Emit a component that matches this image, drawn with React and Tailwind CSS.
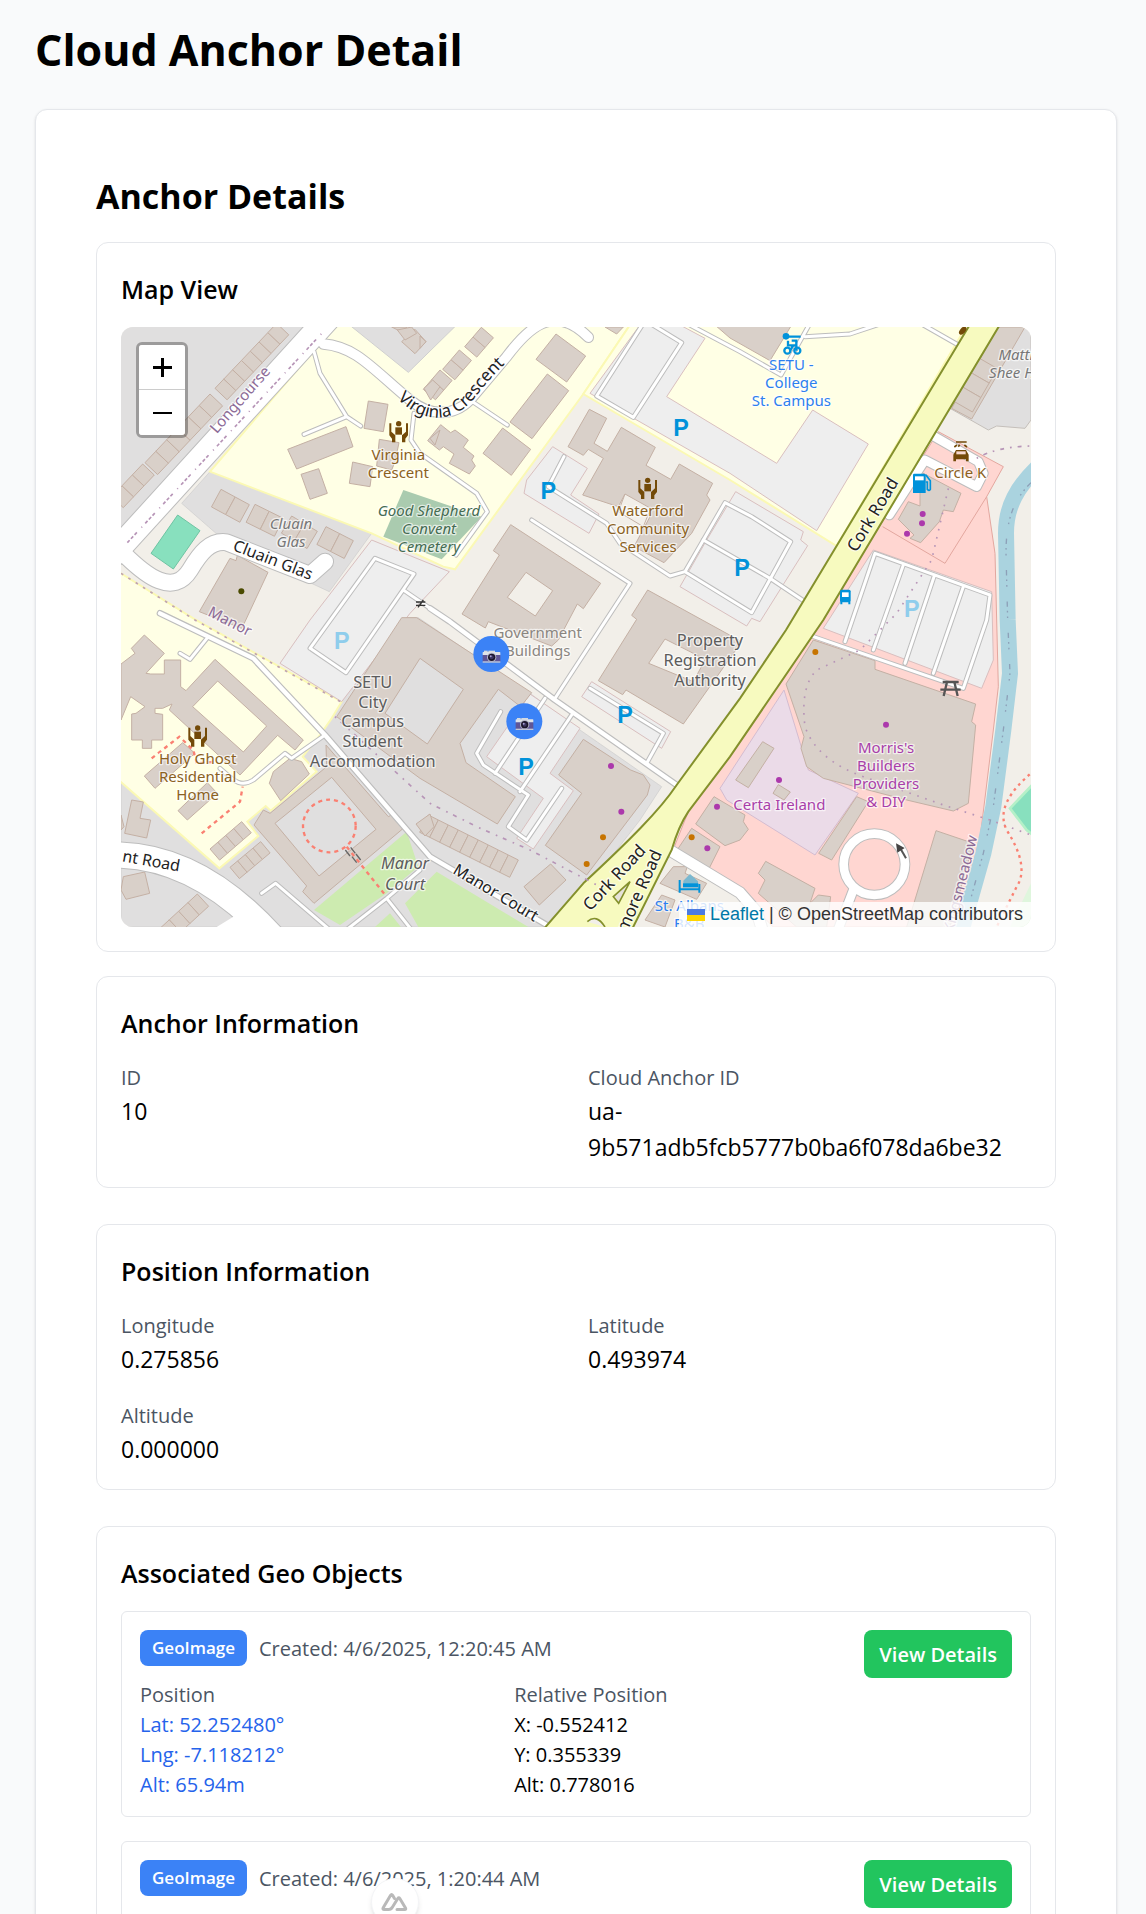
import React from "react";

const BUILDINGS = [
  // Virginia Crescent and Cluain Glas
  "775,243 834,253 820,335 762,325",
  "533,388 708,320 729,380 560,447",
  "573,463 626,446 652,520 600,538",
  "728,426 788,440 780,500 718,490",
  "808,358 867,368 855,425 845,450 800,438",
  "360,715 378,722 382,706 474,757 405,905 395,925 268,875",
  "875,65 915,28 948,65 915,101",
  "845,21 880,38 890,21",
  "905,21 920,40 885,60 862,30",
  "930,48 948,65 930,85",
  "1338,42 1427,108 1370,186 1278,118",
  "1312,162 1376,212 1266,356 1200,306",
  "1178,324 1262,388 1204,466 1119,400",
  "992,314 1022,338 1035,330 1075,360 1060,382 1092,408 1085,420 1096,438 1078,462 1018,430 1032,402 1000,380 988,390 953,362",
  "942,205 968,180 990,200 962,240",
  "960,355 990,330 975,375",
  // Waterford Community Services
  "1438,268 1490,295 1452,370 1492,394 1534,322 1636,382 1608,436 1682,478 1708,432 1808,490 1790,525 1800,540 1745,640 1662,728 1572,680 1620,590 1545,522 1525,560 1418,525 1480,415 1435,388 1420,406 1374,380",
  "1815,15 2045,15 1980,122 1860,54",
  "1485,21 1540,21 1520,42",
  // Government Buildings
  "1202,614 1472,790 1420,866 1402,852 1345,960 1325,978 1135,905 1126,924 1056,882 1168,705 1150,692",
  // Property Registration Authority
  "1613,810 1895,965 1720,1212 1548,1110 1538,1124 1465,1082 1580,898 1565,886",
  // SETU City Campus accommodation
  "875,893 920,893 1265,1118 1232,1160 1165,1108 1050,1270 1068,1328 1216,1430 1162,1512 930,1375 680,1190",
  // Units south of the car park
  "1420,1258 1562,1350 1600,1365 1620,1395 1612,1425 1430,1665 1306,1576 1415,1420 1346,1365",
  "1322,1632 1368,1680 1288,1755 1242,1700",
  // Holy Ghost
  "103,945 163,1000 108,1060 122,1062 163,1062 163,1020 212,1020 212,1100 228,1112 315,1018 580,1260 555,1290 503,1246 390,1365 178,1170 186,1152 158,1165 135,1165 135,1180 158,1183 158,1260 125,1260 125,1285 97,1285 97,1260 65,1260 65,1182 78,1180 105,1160 62,1130 33,1200 33,1032 75,1000 64,985",
  "218,1268 255,1300 135,1405 103,1368",
  "292,1388 322,1420 232,1500 204,1472",
  "540,1315 575,1325 598,1362 512,1442 478,1390 490,1355",
  // Manor Court square
  "648,1275 835,1490 850,1482 880,1525 612,1750 578,1715 590,1698 432,1515 460,1470 480,1480 650,1340",
  "65,1440 100,1446 90,1495 122,1500 110,1554 44,1540",
  "33,1485 42,1520 33,1530",
  "40,1670 104,1656 119,1720 48,1738 33,1710",
  "918,1512 960,1482 972,1520 945,1548",
  // Retail park
  "2430,455 2553,520 2530,575 2500,570 2488,605 2432,668 2400,655 2412,645 2365,598 2395,545 2430,558",
  "2110,960 2295,1022 2295,1048 2597,1152 2585,1205 2597,1215 2575,1450 2530,1473 2390,1440 2140,1375 2090,1340 2073,1285 2082,1250 2028,1092",
  "1958,1265 1992,1285 1915,1403 1877,1380",
  "2005,1394 2041,1416 2022,1440 1989,1420",
  "2240,1430 2275,1445 2165,1620 2126,1600",
  "2478,1532 2590,1570 2520,1821 2390,1821",
  "1967,1624 2115,1705 2100,1750 2125,1725 2162,1730 2150,1821 2060,1821 1945,1720 1965,1680 1945,1660",
  "1812,1430 1905,1485 1900,1505 1915,1528 1890,1560 1845,1577 1757,1512",
  "1745,1525 1830,1580 1795,1650 1700,1592",
  "1690,1640 1732,1640 1725,1660 1790,1690 1760,1738 1650,1690",
  "1655,1725 1695,1740 1665,1821 1605,1800",
];

const COURTYARDS = [
  { p: "323,1083 470,1218 400,1296 248,1160", c: "#ffffe5" },
  { p: "665,1372 798,1528 627,1668 495,1510", c: "#e0dfdf" },
  { p: "930,1015 1060,1108 952,1272 825,1180", c: "#e0dfdf" },
  { p: "1248,757 1328,812 1276,888 1192,832", c: "#f2efe9" },
  { p: "1665,957 1750,1000 1785,1020 1750,1085 1616,1030", c: "#f2efe9" },
  { p: "1545,522 1622,565 1600,620 1525,575", c: "#f2efe9" },
];

// Terraces: start, end, number of houses, depth
const TERRACES = [
  [315, 205, 500, 10, 7, 50],
  [105, 428, 300, 222, 6, 52],
  [5, 530, 98, 432, 3, 48],
  [940, 208, 990, 150, 2, 48],
  [998, 148, 1048, 90, 2, 48],
  [1064, 80, 1114, 22, 2, 48],
  [333, 508, 418, 554, 2, 60],
  [435, 553, 520, 595, 2, 60],
  [545, 588, 622, 634, 2, 60],
  [648, 620, 730, 662, 2, 60],
  [300, 1587, 395, 1505, 4, 44],
  [360, 1642, 452, 1565, 4, 44],
  [150, 1825, 262, 1722, 4, 50],
  [955, 1485, 1225, 1620, 9, 58],
  [2600, 110, 2525, 240, 3, -72],
];

const PATHS = [
  "M612,95 L630,160 L710,290 L752,318 M710,290 L582,343",
  "M912,280 L903,360 L930,400 L1100,520 L1132,575 L1038,705",
  "M1080,240 L1192,315",
  "M1600,10 L1460,228 L1570,292 L1715,68 L1620,10",
  "M1730,10 L1890,95 L2013,165 L2100,10 M2085,50 L2220,42 L2310,12 M2440,15 L2545,75",
  "M1362,410 L1315,500 L1490,610 L1530,670 L1680,768 L1725,755 L1845,548 L1925,590 L2042,665 L1925,878 L1725,755",
  "M1780,660 L1980,775 L2085,845",
  "M1265,600 L1560,790 L1335,1135",
  "M600,985 L795,715 L912,762 L708,1058 L605,988 M880,810 L960,865",
  "M1172,1175 L1100,1300 L1120,1335 L1255,1425 L1195,1520 L1250,1560 L1355,1405 M1305,1135 L1155,1360 M1385,1185 L1230,1415",
  "M1440,1105 L1660,1240 L1610,1330",
  "M295,950 L240,1018 L210,1000",
  "M645,1245 L545,1315 L525,1300 L430,1380 C390,1405 370,1380 330,1345",
  "M455,1720 L497,1690 L660,1830 M715,1825 L830,1735 L930,1650 M830,1735 L905,1830",
  "M2105,948 L2560,1105 L2630,900 L2640,825 L2295,700 L2205,965 M2380,735 L2290,990 M2472,770 L2385,1030 M2560,800 L2470,1060",
];

const MID_ROADS = [
  "M960,865 L1020,905 L1335,1140 L1700,1395",
  "M150,880 L430,1015 L645,1245 L960,1610 L1310,1815",
];

const WIDE_ROADS = [
  ["M690,-45 L0,714", 72],
  ["M40,700 C110,770 190,830 240,750 C270,700 300,660 350,667 L600,765 L645,725", 48],
  ["M640,72 C740,80 790,150 900,240 C960,290 1030,290 1080,240 L1190,110 C1250,30 1330,-55 1435,52", 28],
  ["M0,1605 C200,1600 370,1710 520,1890", 76],
  ["M2465,345 L2605,425 L2620,460 L2600,500 L2445,420 L2338,585", 26],
  ["M1675,1588 L1890,1718 L1940,1775 L1960,1840", 32],
  ["M2230,1710 L2180,1840", 26],
];

const P_SIGNS = [
  [1713, 347], [1315, 537], [1896, 767], [1545, 1208], [1248, 1365],
];
const P_FAINT = [[695, 987], [2405, 892]];

const DOTS = [
  [394, 814, "#4a4a00"], [2438, 582, "#ac39ac"], [2436, 610, "#ac39ac"], [2391, 641, "#ac39ac"],
  [1503, 1338, "#ac39ac"], [1534, 1475, "#ac39ac"], [1479, 1552, "#c77400"], [1430, 1632, "#c77400"],
  [2116, 996, "#c77400"], [2328, 1214, "#ac39ac"], [2007, 1380, "#ac39ac"],
  [1821, 1460, "#ac39ac"], [1745, 1552, "#c77400"], [1792, 1585, "#ac39ac"],
];

const LABELS = [
  { x: 865, y: 421, c: "#8b6122", lines: ["Virginia", "Crescent"] },
  { x: 1614, y: 589, c: "#8b6122", lines: ["Waterford", "Community", "Services"] },
  { x: 263, y: 1333, c: "#8b6122", lines: ["Holy Ghost", "Residential", "Home"] },
  { x: 2551, y: 473, c: "#8b6122", lines: ["Circle K"] },
  { x: 2044, y: 149, c: "#2d7ff0", lines: ["SETU -", "College", "St. Campus"] },
  { x: 1738, y: 1773, c: "#2d7ff0", lines: ["St. Albans", "B&B"] },
  { x: 2328, y: 1300, c: "#a93fa9", lines: ["Morris's", "Builders", "Providers", "& DIY"] },
  { x: 2008, y: 1469, c: "#a93fa9", lines: ["Certa Ireland"] },
  { x: 1283, y: 955, c: "#8a8580", lines: ["Government", "Buildings"] },
  { x: 543, y: 627, c: "#777", i: true, lines: ["Cluain", "Glas"] },
  { x: 957, y: 588, c: "#456b52", i: true, lines: ["Good Shepherd", "Convent", "Cemetery"] },
  { x: 2752, y: 119, c: "#777", i: true, lines: ["Matthew", "Shee House"] },
];
const BIG_LABELS = [
  { x: 788, y: 1104, lines: ["SETU", "City", "Campus", "Student", "Accommodation"], gap: 59 },
  { x: 1800, y: 979, lines: ["Property", "Registration", "Authority"], gap: 59 },
  { x: 885, y: 1646, i: true, lines: ["Manor", "Court"], gap: 64 },
];

function Terrace({ d: [x1, y1, x2, y2, n, depth] }) {
  const dx = (x2 - x1) / n;
  const dy = (y2 - y1) / n;
  const len = Math.hypot(dx, dy);
  const nx = (-dy / len) * depth;
  const ny = (dx / len) * depth;
  return Array.from({ length: n }, (_, k) => {
    const ax = x1 + dx * k;
    const ay = y1 + dy * k;
    return (
      <polygon
        key={k}
        points={`${ax},${ay} ${ax + dx},${ay + dy} ${ax + dx + nx},${ay + dy + ny} ${ax + nx},${ay + ny}`}
      />
    );
  });
}

function Label({ x, y, c = "#5c5c5c", i, lines, gap = 54, size = 45 }) {
  return (
    <text x={x} y={y} fill={c} fontSize={size} fontStyle={i ? "italic" : "normal"} textAnchor="middle">
      {lines.map((l, k) => (
        <tspan key={l} x={x} dy={k ? gap : 0}>{l}</tspan>
      ))}
    </text>
  );
}

function Community({ x, y }) {
  return (
    <g transform={`translate(${x} ${y})`} fill="#734a08">
      <circle cx="0" cy="-24" r="8" />
      <rect x="-10" y="-13" width="20" height="22" />
      <path d="M-28,-25 h6 v25 l12,11 v21 h-10 v-11 l-8,-10z M28,-25 h-6 v25 l-12,11 v21 h10 v-11 l8,-10z" />
    </g>
  );
}

function Marker({ x, y }) {
  return (
    <g transform={`translate(${x} ${y})`}>
      <circle r="54" fill="#3b82f6" />
      <rect x="-22" y="-10" width="11" height="5" fill="#d5dadf" />
      <rect x="-9" y="-10" width="20" height="5" fill="#d5dadf" />
      <rect x="-26" y="-6" width="53" height="10" rx="2" fill="#dfe3e8" />
      <rect x="-26" y="3" width="53" height="20" fill="#5f5596" />
      <rect x="-26" y="22" width="53" height="4" fill="#c3c6d6" />
      <circle cx="1" cy="10" r="14" fill="#b3b4c8" />
      <circle cx="1" cy="10" r="11" fill="#1c162c" />
      <circle cx="1" cy="10" r="6" fill="#3c3560" />
      <circle cx="-2" cy="7" r="3" fill="#a9a2d4" />
    </g>
  );
}

function MapDrawing() {
  return (
    <svg
      viewBox="33 21 2730 1800"
      preserveAspectRatio="xMidYMid slice"
      className="block h-full w-full"
      fontFamily='"Noto Sans", sans-serif'
      role="img"
      aria-label="Street map around Cork Road"
    >
      <rect x="0" y="0" width="2800" height="1850" fill="#f2efe9" />

      {/* Land use */}
      <g fill="#e0dfdf">
        <polygon points="0,0 620,0 0,690" />
        <polygon points="215,550 300,455 785,640 658,815 540,760 340,645 318,640" stroke="#ccc" strokeWidth="2" />
        <polygon points="33,1383 328,1645 445,1548 412,1505 467,1458 620,1355 578,1310 630,1245 695,1145 885,893 925,893 1260,1120 1410,1230 1655,1400 1590,1500 1450,1680 1300,1821 33,1821" stroke="#ccc" strokeWidth="2" />
        <polygon points="2665,21 2520,265 2635,330 2660,318 2745,325 2763,300 2763,21" stroke="#c4bfba" strokeWidth="3" />
      </g>
      <g fill="#ffffe5" stroke="#fbf9b4" strokeWidth="6">
        <polygon points="690,0 300,455 785,640 1000,740 1035,748 1420,222 1570,0" />
        <polygon points="1570,0 1420,222 1860,480 2180,678 2580,0" />
        <polygon points="20,752 250,895 695,1145 665,1195 630,1245 578,1310 620,1355 482,1472 467,1458 412,1505 445,1548 328,1645 20,1375" />
      </g>
      <polygon points="700,0 895,157 1055,0" fill="#e0dfdf" stroke="#cfcfcf" strokeWidth="3" />
      <polygon points="880,510 1115,590 995,718 820,650" fill="#aacbaf" />
      <polygon points="203,585 270,632 190,747 123,700" fill="#88e0be" stroke="#6fc4a3" strokeWidth="3" />
      <g fill="#cdebb0">
        <polygon points="890,1535 925,1640 830,1720 690,1815 612,1770" />
        <polygon points="885,1750 980,1655 1270,1830 930,1830" />
        <polygon points="785,1830 840,1780 880,1830" />
      </g>
      <polygon
        points="2485,335 2680,440 2630,530 2655,700 2665,1100 2650,1230 2612,1540 2590,1640 2560,1740 2530,1821 1990,1821 1930,1760 1685,1600 1735,1475 2140,900 2320,600"
        fill="#ffd6d1" stroke="#e3a79f" strokeWidth="3"
      />
      <path d="M2630,530 L2505,730 L2318,620" fill="none" stroke="#e3a79f" strokeWidth="3" />
      <polygon points="2022,1110 2095,1350 2245,1420 2115,1605 1850,1440 1830,1405" fill="#ebdbe8" stroke="#d3bcd0" strokeWidth="3" />
      <polygon points="2700,1465 2800,1360 2800,1570 2750,1530" fill="#88e0be" stroke="#b5f0c8" strokeWidth="8" />
      <polygon points="2700,1821 2763,1690 2763,1821" fill="#dff6dd" />

      {/* Car parks */}
      <g fill="#eeeeee" stroke="#d9bfbf" strokeWidth="3">
        <polygon points="785,660 1018,755 900,880 695,1145 510,1030 600,900" />
        <polygon points="1590,15 1440,220 1860,460 2120,632 2275,372 2108,270 2000,430 1860,345 1670,230 1785,55 1710,15" />
        <polygon points="1328,380 1432,445 1382,525 1467,582 1437,640 1242,520 1250,480" />
        <polygon points="1877,515 2080,635 2072,660 2093,677 1950,905 1925,895 1910,918 1710,800 1790,660" />
        <polygon points="2290,690 2645,815 2650,1020 2615,1105 2140,925" />
        <polygon points="1260,1122 1410,1225 1320,1360 1390,1412 1270,1587 1220,1555 1300,1435 1130,1310" />
        <polygon points="1445,1085 1682,1235 1655,1285 1415,1130" />
      </g>

      {/* River */}
      <path d="M2790,435 C2720,500 2688,560 2688,640 L2693,900 L2700,1060 L2680,1230 L2650,1460 L2620,1600 L2555,1830" fill="none" stroke="#aad3df" strokeWidth="48" />
      <path d="M2763,488 C2710,540 2688,600 2688,700 L2693,900 L2700,1060 L2680,1230 L2650,1460 L2620,1600 L2570,1780" fill="none" stroke="#8da0b8" strokeWidth="4" strokeDasharray="16 12 5 12 5 44" />

      {/* Buildings */}
      <g fill="#d9d0c9" stroke="#c4b0a4" strokeWidth="3">
        <polygon points="2665,21 2745,21 2585,297 2525,265" />
        {TERRACES.map((d, k) => <Terrace key={k} d={d} />)}
        {BUILDINGS.map((p) => <polygon key={p} points={p} />)}
        {COURTYARDS.map((y) => <polygon key={y.p} points={y.p} style={{ fill: y.c }} />)}
      </g>

      {/* Roads: casing, then fill */}
      <g fill="none" strokeLinejoin="round" strokeLinecap="round">
        <g stroke="#bdbdbd">
          {PATHS.map((d) => <path key={d} d={d} strokeWidth="15" />)}
          {MID_ROADS.map((d) => <path key={d} d={d} strokeWidth="20" />)}
          {WIDE_ROADS.map(([d, w]) => <path key={d} d={d} strokeWidth={w + 6} />)}
          <circle cx="2293" cy="1633" r="92" strokeWidth="32" />
        </g>
        <g stroke="#fff">
          {PATHS.map((d) => <path key={d} d={d} strokeWidth="9" />)}
          {MID_ROADS.map((d) => <path key={d} d={d} strokeWidth="13" />)}
          {WIDE_ROADS.map(([d, w]) => <path key={d} d={d} strokeWidth={w} />)}
          <circle cx="2293" cy="1633" r="92" strokeWidth="26" />
        </g>
      </g>
      <polygon points="320,1821 375,1787 480,1840 320,1840" fill="#fff" />

      {/* Cork Road */}
      <path
        d="M2600,-20 L2028,930 L1890,1135 L1700,1395 C1650,1470 1560,1560 1420,1690 L1290,1840 L1560,1840 L1685,1590 Q1705,1520 1735,1475 L1860,1310 L2140,900 L2690,-20z"
        fill="#f7fabf" stroke="#84902c" strokeWidth="6"
      />
      <path d="M1510,1730 L1560,1685 L1526,1750z" fill="#e6e2d8" stroke="#84902c" strokeWidth="5" />
      <path d="M1432,1805 Q1460,1780 1485,1821" fill="#f2efe9" stroke="#84902c" strokeWidth="5" />

      {/* Footpaths and boundaries */}
      <g fill="none" stroke="#b795b7" strokeWidth="5">
        <path d="M52,668 L640,35" strokeDasharray="10 6 10 6 10 20 3 14" />
        <path d="M33,760 L255,900 L695,1147" strokeDasharray="8 18" stroke="#c0a3b0" />
        <path d="M675,1190 L960,1450 L1100,1520 L1260,1590 L1470,1700" strokeDasharray="5 18 12 20" />
        <path d="M2515,505 L2465,720 L2360,880 L2250,990 L2120,1050 Q2070,1100 2085,1220 Q2120,1320 2260,1370 L2500,1455 L2640,1500 L2763,1545" strokeDasharray="5 20" />
        <path d="M2600,415 Q2660,380 2763,378" strokeDasharray="5 18 12 18" />
      </g>
      <g fill="none" stroke="#fa8072" strokeWidth="7" strokeDasharray="12 12">
        <circle cx="658" cy="1518" r="79" />
        <path d="M710,1580 L828,1728" />
        <path d="M275,1540 L390,1445 L398,1400 M125,1315 L208,1250 L250,1290 L260,1330 L320,1325" />
        <path d="M2775,1350 Q2650,1450 2690,1530 Q2760,1640 2720,1700 L2660,1821" strokeDasharray="8 12" />
      </g>
      <path d="M706,1590 l14,18 M726,1610 l14,18 M722,1582 l14,18 M738,1602 l14,18" stroke="#666" strokeWidth="4" />
      <path d="M2388,1615 l-18,-32" stroke="#555" strokeWidth="6" />
      <path d="M2358,1570 l26,14 l-22,14z" fill="#444" />

      {/* Points of interest */}
      {DOTS.map(([x, y, c]) => <circle key={`${x}-${y}`} cx={x} cy={y} r="9" fill={c} />)}
      <Community x={866} y={335} />
      <Community x={1613} y={505} />
      <Community x={263} y={1248} />
      <g fill="none" stroke="#0092da" strokeWidth="7">
        <circle cx="2032" cy="92" r="9" />
        <circle cx="2062" cy="92" r="9" />
        <path d="M2024,50 h48 M2034,62 v14 h26 M2045,62 h14 v30 M2040,92 l10,-16" />
      </g>
      <circle cx="2028" cy="49" r="10" fill="#0092da" />
      <path d="M2409,465 q0,-4 4,-4 h30 q4,0 4,4 v54 h-38z" fill="#0092da" />
      <rect x="2415" y="469" width="26" height="12" fill="#fff" />
      <path d="M2447,486 h5 v22 q6,6 9,0 v-26 l-14,-18" fill="none" stroke="#0092da" strokeWidth="5" />
      <rect x="2190" y="809" width="32" height="38" rx="5" fill="#0092da" />
      <path d="M2196,817 h20 v14 h-20z" fill="#fff" />
      <path d="M2194,846 v7 M2218,846 v7" stroke="#0092da" strokeWidth="6" />
      <g fill="#734a08">
        <path d="M2530,424 v-20 l8,-14 h30 l8,14 v20 h-8 v-6 h-30 v6z" />
        <path d="M2533,381 l8,-6 M2545,380 l4,-6 M2571,381 l-8,-6 M2538,366 h32" stroke="#734a08" strokeWidth="5" />
        <ellipse cx="2558" cy="32" rx="14" ry="8" transform="rotate(-50 2558 32)" />
      </g>
      <rect x="2539" y="394" width="28" height="9" fill="#f6d9cf" />
      <path d="M2498,1086 h48 M2491,1109 h61 M2511,1086 l-10,42 M2533,1086 l10,42" stroke="#555" strokeWidth="7" fill="none" />
      <path d="M1709,1680 v38 M1768,1692 v26 M1709,1708 h59" stroke="#0092da" strokeWidth="6" />
      <path d="M1720,1682 l20,-20 l24,22 v8 h-44z" fill="#7ab8d0" />
      <rect x="1719" y="1690" width="46" height="12" fill="#0092da" />
      <path d="M918,846 h28 M918,856 h28 M924,862 l16,-22" stroke="#333" strokeWidth="4" />

      {/* Labels */}
      <g stroke="#fff" strokeOpacity="0.65" strokeWidth="8" strokeLinejoin="round" style={{ paintOrder: "stroke" }}>
        {LABELS.map((l) => <Label key={l.lines[0]} {...l} />)}
        {BIG_LABELS.map((l) => <Label key={l.lines[0]} size={49} {...l} />)}
        <g fill="#222" fontSize="48">
          <path id="virginia" d="M862,236 C925,300 1010,320 1085,245 C1120,200 1160,150 1230,90" fill="none" stroke="none" />
          <text fontSize="51"><textPath href="#virginia">Virginia Crescent</textPath></text>
          <text transform="translate(366 690) rotate(21)">Cluain Glas</text>
          <text transform="translate(1026 1658) rotate(31)">Manor Court</text>
          <text transform="translate(35 1624) rotate(10)">nt Road</text>
          <text transform="translate(2239 699) rotate(-59)" fontSize="51">Cork Road</text>
          <text transform="translate(1441 1775) rotate(-47)" fontSize="51">Cork Road</text>
          <text transform="translate(1550 1840) rotate(-66)" fontSize="51">more Road</text>
        </g>
        <g fill="#8c6b97" fontSize="45">
          <text transform="translate(320 343) rotate(-49)">Longcourse</text>
          <text transform="translate(291 886) rotate(27)">Manor</text>
          <text transform="translate(2530 1840) rotate(-76)">Kingsmeadow</text>
        </g>
      </g>
      <g fontFamily='"Liberation Sans", Arial, sans-serif' fontWeight="bold" fontSize="70" textAnchor="middle">
        {P_SIGNS.map(([x, y]) => <text key={x} x={x} y={y} fill="#0092da">P</text>)}
        {P_FAINT.map(([x, y]) => <text key={x} x={x} y={y} fill="#8fcdec">P</text>)}
      </g>

      <Marker x={1144} y={1002} />
      <Marker x={1243} y={1204} />
    </svg>
  );
}

function MapView() {
  return (
    <div className="relative h-[600px] overflow-hidden rounded-xl">
      <MapDrawing />
      <div className="absolute top-[15px] left-[15px] flex flex-col overflow-hidden rounded-md border-3 border-black/30 bg-clip-padding">
        <button type="button" aria-label="Zoom in" className="flex h-[45px] w-[46px] items-center justify-center border-b border-[#ccc] bg-white">
          <svg width="19" height="19" viewBox="0 0 19 19" stroke="#000" strokeWidth="3"><path d="M0 9.5h19M9.5 0v19" /></svg>
        </button>
        <button type="button" aria-label="Zoom out" className="flex h-[45px] w-[46px] items-center justify-center bg-white">
          <svg width="19" height="19" viewBox="0 0 19 19" stroke="#000" strokeWidth="2"><path d="M0 10h19" /></svg>
        </button>
      </div>
      <div className="absolute right-0 bottom-0 flex h-[25px] items-center gap-[5px] bg-white/80 px-2 font-['Liberation_Sans',Arial,sans-serif] text-[18px] leading-[25px] text-[#333]">
        <svg width="18" height="12" viewBox="0 0 18 12" aria-hidden="true">
          <path fill="#4c7be1" d="M0 0h18v6H0z" />
          <path fill="#ffd500" d="M0 6h18v6H0z" />
        </svg>
        <span>
          <a href="#leaflet" className="text-[#0078a8]">Leaflet</a> | © OpenStreetMap contributors
        </span>
      </div>
    </div>
  );
}

function Panel({ title, children }) {
  return (
    <section className="rounded-xl border border-[#e5e7eb] p-6">
      <h3 className="mb-4 text-[25px] leading-[44px] font-semibold">{title}</h3>
      {children}
    </section>
  );
}

function FieldGrid({ children }) {
  return <dl className="-mb-0.5 grid grid-cols-2 gap-6 pt-0.5">{children}</dl>;
}

function Field({ label, value }) {
  return (
    <div>
      <dt className="text-[20px] leading-[30px] text-[#4b5563]">{label}</dt>
      <dd className="text-[23px] leading-[36px]">{value}</dd>
    </div>
  );
}

function GeoObject({ item }) {
  return (
    <article className="flex items-start rounded-md border border-[#e5e7eb] p-[18px]">
      <div className="min-w-0 flex-1">
        <div className="mb-3 flex items-center gap-3">
          <span className="rounded-lg bg-[#3b82f6] px-3 text-[17px] leading-[36px] font-semibold text-white">{item.type}</span>
          <span className="pt-0.5 text-[20px] leading-[30px] text-[#4b5563]">Created: {item.created}</span>
        </div>
        <div className="-mb-0.5 grid grid-cols-2 gap-6 pt-0.5 text-[20px] leading-[30px]">
          <div>
            <p className="text-[#4b5563]">Position</p>
            {item.position.map((line) => <p key={line} className="text-[#2563eb]">{line}</p>)}
          </div>
          <div>
            <p className="text-[#4b5563]">Relative Position</p>
            {item.relative.map((line) => <p key={line}>{line}</p>)}
          </div>
        </div>
      </div>
      <button type="button" className="h-12 rounded-lg bg-[#22c55e] px-[15px] pt-0.5 text-[20px] leading-[30px] font-semibold text-white">View Details</button>
    </article>
  );
}

const ITEMS = [
  {
    type: "GeoImage",
    created: "4/6/2025, 12:20:45 AM",
    position: ["Lat: 52.252480°", "Lng: -7.118212°", "Alt: 65.94m"],
    relative: ["X: -0.552412", "Y: 0.355339", "Alt: 0.778016"],
  },
  {
    type: "GeoImage",
    created: "4/6/2025, 1:20:44 AM",
    position: [],
    relative: [],
  },
];

export default function App() {
  return (
    <div className="h-screen overflow-hidden bg-[#f9fafb] font-['Open_Sans','Noto_Sans',sans-serif] text-black">
      <main className="pt-6 pr-[29px] pl-[35px]">
        <h1 className="mb-[33px] text-[43px] leading-[52px] font-bold">Cloud Anchor Detail</h1>
        <div className="rounded-xl border border-[#e5e7eb] bg-white p-[60px] shadow-sm">
          <h2 className="mb-5 text-[34px] leading-[52px] font-bold">Anchor Details</h2>
          <Panel title="Map View">
            <MapView />
          </Panel>
          <div className="mt-6 flex flex-col gap-9">
            <Panel title="Anchor Information">
              <FieldGrid>
                <Field label="ID" value="10" />
                <Field label="Cloud Anchor ID" value="ua-9b571adb5fcb5777b0ba6f078da6be32" />
              </FieldGrid>
            </Panel>
            <Panel title="Position Information">
              <FieldGrid>
                <Field label="Longitude" value="0.275856" />
                <Field label="Latitude" value="0.493974" />
                <Field label="Altitude" value="0.000000" />
              </FieldGrid>
            </Panel>
            <Panel title="Associated Geo Objects">
              <div className="flex flex-col gap-6">
                {ITEMS.map((item) => <GeoObject key={item.created} item={item} />)}
              </div>
            </Panel>
          </div>
        </div>
      </main>
      <button
        type="button"
        aria-label="Toggle developer tools"
        className="fixed -bottom-3 left-[371px] flex h-12 w-12 items-center justify-center rounded-full border border-gray-100 bg-white shadow-md"
      >
        <svg width="28" height="20" viewBox="0 0 28 20" fill="none" stroke="#b9b9b9" strokeWidth="3" strokeLinecap="round" strokeLinejoin="round">
          <path d="M13.500 6.500L11.600 3.200q-1-1.600-2 0L2.200 15.800q-.9 1.700 1 1.700h4.600q2.300 0 3.700-2.500L16.800 6.500q1-1.500 2 0l5.700 9.500q.8 1.500-.9 1.500H16" />
        </svg>
      </button>
    </div>
  );
}
